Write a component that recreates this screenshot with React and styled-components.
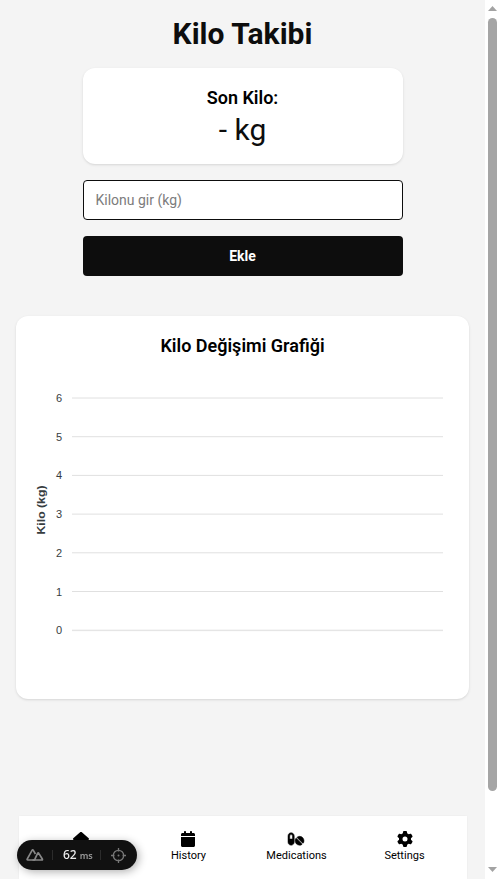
import React from "react";
import styled, { createGlobalStyle } from "styled-components";
import { FaHouse, FaCalendar, FaPills, FaGear } from "react-icons/fa6";

const GlobalStyle = createGlobalStyle`
  *, *::before, *::after { box-sizing: border-box; }
  html, body { margin: 0; padding: 0; overflow: hidden; background: #fff; }
  body { font-family: Roboto, sans-serif; color: #000; }
  h1, h2, p { margin: 0; }
`;

const Shell = styled.div`
  display: grid;
  grid-template-columns: minmax(0, 1fr) 15px;
  width: 100%;
  height: 100vh;
  overflow: hidden;
`;

const Page = styled.div`
  display: flex;
  flex-direction: column;
  justify-content: space-between;
  background: #f4f4f4;
`;

const Main = styled.main`
  display: flex;
  flex-direction: column;
  align-items: center;
  padding: 16px;
`;

const Title = styled.h1`
  color: #0d0d0d;
  font-size: 30px;
  line-height: 36px;
  font-weight: 700;
  margin-bottom: 16px;
`;

const Card = styled.section`
  width: ${(p) => p.$width};
  height: ${(p) => p.$height}px;
  padding: 16px;
  background: #fff;
  border-radius: 12px;
  box-shadow: 0 1px 3px rgba(0, 0, 0, 0.1), 0 1px 2px -1px rgba(0, 0, 0, 0.1);
  text-align: center;
`;

const CardTitle = styled.h2`
  font-size: 18px;
  line-height: 28px;
  font-weight: 600;
`;

const Weight = styled.p`
  font-size: 30px;
  line-height: 36px;
  color: #0d0d0d;
`;

const Form = styled.form`
  display: flex;
  flex-direction: column;
  gap: 16px;
  width: 320px;
  margin: 16px 0 40px;
`;

const Input = styled.input`
  height: 40px;
  padding: 0 12px;
  border: 1px solid #0d0d0d;
  border-radius: 4px;
  background: #fff;
  font: 400 14px/20px Roboto, sans-serif;
  outline: none;
  &::placeholder { color: #7c7c7c; opacity: 1; }
`;

const SubmitButton = styled.button`
  height: 40px;
  border: 0;
  border-radius: 4px;
  background: #0d0d0d;
  color: #fff;
  font: 700 14px/20px Roboto, sans-serif;
`;

const Chart = styled.svg`
  display: block;
  width: 421px;
  height: 315px;
  font-family: "Liberation Sans", Arial, sans-serif;
  font-size: 11px;
  fill: #373d3f;
`;

const Nav = styled.nav`
  display: flex;
  align-self: center;
  flex: none;
  width: 448px;
  height: 63px;
  padding: 15px 8px 0;
  background: #fff;
  box-shadow: 0 0 2px rgba(0, 0, 0, 0.05);
`;

const NavItem = styled.a`
  display: flex;
  flex: 1;
  flex-direction: column;
  align-items: center;
  font-size: 11px;
  line-height: 18px;
  color: #000;
  svg {
    flex: none;
    width: auto;
    height: 16px;
    margin-right: ${(p) => p.$nudge || 0}px;
    overflow: visible;
    stroke: #000;
    stroke-width: ${(p) => p.$stroke || 0}px;
  }
`;

const DevBar = styled.div`
  position: fixed;
  left: 17px;
  bottom: 9px;
  display: flex;
  align-items: center;
  width: 120px;
  height: 30px;
  padding: 0 10px 0 9px;
  border-radius: 15px;
  background: #111;
  box-shadow: 2px 2px 8px rgba(0, 0, 0, 0.3);
  color: #888;
  svg { flex: none; }
`;

const Divider = styled.i`
  width: 1px;
  height: 10px;
  margin: 0 10px 0 8px;
  background: #2c2c2c;
`;

const Timing = styled.span`
  display: flex;
  align-items: baseline;
  gap: 3px;
  width: 29px;
  font: 500 12px/16px "Noto Sans", sans-serif;
  color: #eee;
  small { font-size: 9px; font-weight: 600; color: #999; }
`;

const Scrollbar = styled.div`
  display: flex;
  flex-direction: column;
  align-items: center;
  background: #fff;
  padding: 6px 0 7px;
`;

const Arrow = styled.svg`
  width: 9px;
  height: 5px;
  fill: #a3a3a3;
  flex: none;
`;

const Thumb = styled.div`
  width: 9px;
  height: 773px;
  margin: 7px 0 auto;
  border-radius: 5px;
  background: #a5a5a5;
`;

const navItems = [
  { id: "home", Icon: FaHouse },
  { id: "history", label: "History", Icon: FaCalendar, nudge: 1 },
  { id: "medications", label: "Medications", Icon: FaPills, stroke: 18, nudge: 1 },
  { id: "settings", label: "Settings", Icon: FaGear },
];

const ticks = [6, 5, 4, 3, 2, 1, 0];

function WeightChart() {
  return (
    <Chart viewBox="0 0 421 315">
      {ticks.map((t, i) => {
        const y = 38 + i * 38.7;
        return (
          <g key={t}>
            <line x1="40" x2="411" y1={y} y2={y} stroke="#e0e0e0" />
            <text x="30" y={y + 4} textAnchor="end">{t}</text>
          </g>
        );
      })}
      <line x1="40" x2="411" y1="270.7" y2="270.7" stroke="#e0e0e0" strokeOpacity="0.5" />
      <text transform="translate(13 150) rotate(-90)" textAnchor="middle" fontWeight="900" textLength="49" lengthAdjust="spacingAndGlyphs">Kilo (kg)</text>
    </Chart>
  );
}

export default function App() {
  return (
    <>
      <GlobalStyle />
      <Shell>
        <Page>
          <Main>
            <Title>Kilo Takibi</Title>
            <Card $width="320px" $height={96}>
              <CardTitle>Son Kilo:</CardTitle>
              <Weight>- kg</Weight>
            </Card>
            <Form onSubmit={(e) => e.preventDefault()}>
              <Input placeholder="Kilonu gir (kg)" />
              <SubmitButton>Ekle</SubmitButton>
            </Form>
            <Card $width="100%" $height={383}>
              <CardTitle>Kilo Değişimi Grafiği</CardTitle>
              <WeightChart />
            </Card>
          </Main>
          <Nav>
            {navItems.map(({ id, label, Icon, stroke, nudge }) => (
              <NavItem key={id} $stroke={stroke} $nudge={nudge}>
                <Icon />
                {label}
              </NavItem>
            ))}
          </Nav>
        </Page>
        <Scrollbar>
          <Arrow viewBox="0 0 9 5"><path d="M4.5 0 9 5H0Z" /></Arrow>
          <Thumb />
          <Arrow viewBox="0 0 9 5"><path d="M0 0H9L4.5 5Z" /></Arrow>
        </Scrollbar>
      </Shell>
      <DevBar>
        <svg width="18" height="14" viewBox="0 0 18 14" fill="none" stroke="#888" strokeWidth="1.7" strokeLinejoin="round">
          <path d="M9.2 12H1.8Q.7 12 1.3 10.9L5.9 2.6Q6.7 1.3 7.5 2.6L9.4 6" />
          <path d="M7.2 12Q8.4 12 9 10.9L11.6 5.4Q12.2 4.3 12.8 5.4L16.3 11Q16.8 12 15.8 12H7.2Z" />
        </svg>
        <Divider />
        <Timing>62<small>ms</small></Timing>
        <Divider />
        <svg width="15" height="15" viewBox="0 0 15 15" fill="none" stroke="#777" strokeWidth="1.3">
          <circle cx="7.5" cy="7.5" r="5.2" />
          <path d="M7.5 0V3.5M7.5 11.5V15M0 7.5H3.5M11.5 7.5H15" />
          <circle cx="7.5" cy="7.5" r="1" fill="#777" stroke="none" />
        </svg>
      </DevBar>
    </>
  );
}
